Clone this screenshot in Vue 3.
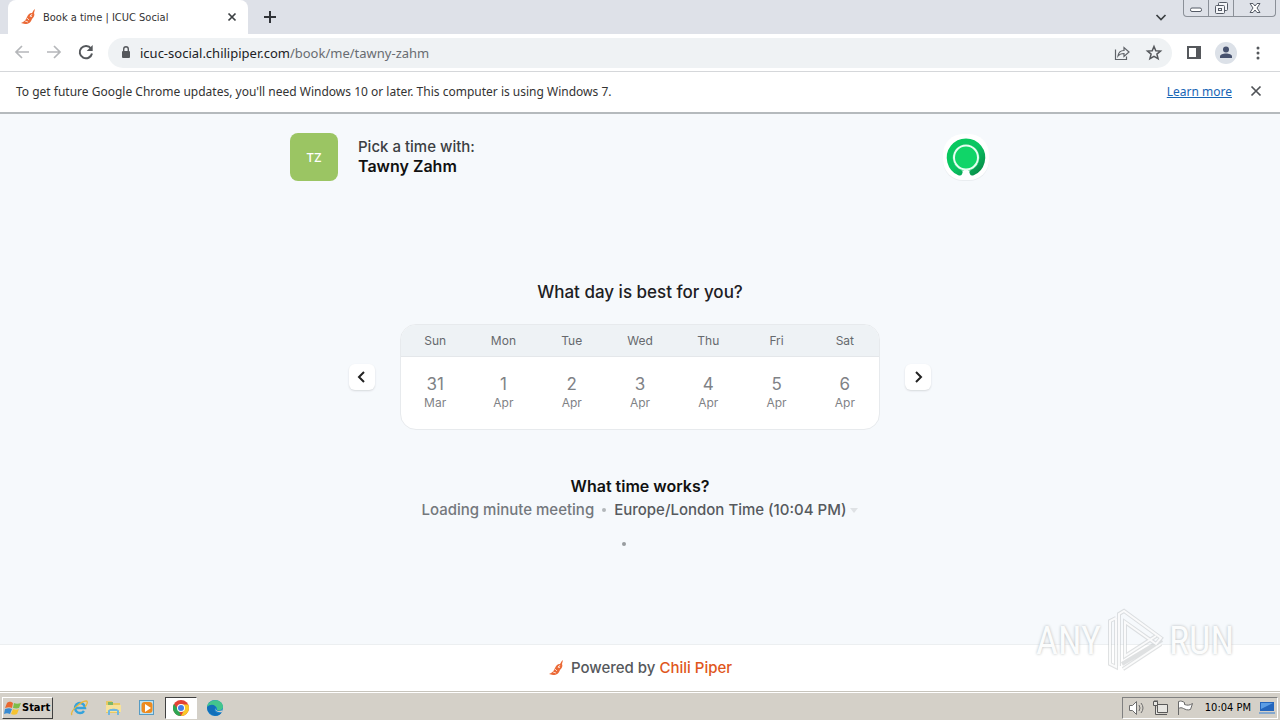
<script setup>
const days = [
  { name: 'Sun', date: '31', month: 'Mar' },
  { name: 'Mon', date: '1', month: 'Apr' },
  { name: 'Tue', date: '2', month: 'Apr' },
  { name: 'Wed', date: '3', month: 'Apr' },
  { name: 'Thu', date: '4', month: 'Apr' },
  { name: 'Fri', date: '5', month: 'Apr' },
  { name: 'Sat', date: '6', month: 'Apr' },
]
</script>

<template>
  <div class="desktop">
    <header class="tabstrip">
      <div class="tab">
        <svg class="chili" viewBox="0 0 16 18" aria-hidden="true">
          <path d="M15 1c-2 1-2 3-3 4-3 0-4 2-5 4-1 3-3 5-6 6l4 1c4 0 6-2 7-5 2-2 3-4 2-6z" />
          <path class="cut" d="M12 6l-2 3M7 10l2 2M5 13l3 1M10 7l2 2" />
        </svg>
        <span class="tab-title">Book a time | ICUC Social</span>
        <button class="plain" aria-label="Close tab"><svg width="16" height="16" viewBox="0 0 16 16"><path d="M4.500 4.500l7 7M11.500 4.500l-7 7" stroke="#3c4043" stroke-width="1.700" /></svg></button>
      </div>
      <button class="plain newtab" aria-label="New tab"><svg width="16" height="16" viewBox="0 0 16 16"><path d="M8 2v12M2 8h12" stroke="#303338" stroke-width="2" /></svg></button>
      <button class="plain chevron" aria-label="Search tabs"><svg width="16" height="16" viewBox="0 0 16 16" fill="none"><path d="M3.500 6l4.500 4.500L12.500 6" stroke="#3c4043" stroke-width="1.700" /></svg></button>
      <div class="winbuttons">
        <button aria-label="Minimize"><svg width="16" height="16" viewBox="0 0 16 16" fill="none"><rect x="2.500" y="8" width="11" height="3.500" rx="1.500" fill="#fff" stroke="#555b66" /></svg></button>
        <button aria-label="Restore"><svg width="16" height="16" viewBox="0 0 16 16" fill="#f4f5f8" stroke="#555b66"><rect x="5.500" y="2.500" width="9" height="8" rx="1" /><rect x="2.500" y="5.500" width="9" height="8" rx="1" /><rect x="5.500" y="8.500" width="3" height="2" /></svg></button>
        <button class="winclose" aria-label="Close"><svg width="16" height="16" viewBox="0 0 16 16" fill="#fff" stroke="#555b66"><path d="M3 3.500h3l2 2.500 2-2.500h3L10 8l3 4.500h-3L8 10l-2 2.500H3L6 8z" /></svg></button>
      </div>
    </header>

    <nav class="toolbar">
      <button class="plain" aria-label="Back"><svg width="20" height="20" viewBox="0 0 20 20" fill="none" stroke="#b5b7ba" stroke-width="1.700"><path d="M17 9H4M10 3L4 9l6 6" /></svg></button>
      <button class="plain" aria-label="Forward"><svg width="20" height="20" viewBox="0 0 20 20" fill="none" stroke="#b5b7ba" stroke-width="1.700"><path d="M3 9h13M10 3l6 6-6 6" /></svg></button>
      <button class="plain" aria-label="Reload"><svg width="20" height="20" viewBox="0 0 20 20" fill="none"><path d="M15 5.500A6.200 6.200 0 1 0 16 10.500" stroke="#55585c" stroke-width="2" /><path d="M16.700 2v6h-6z" fill="#55585c" /></svg></button>
      <div class="address">
        <svg class="lock" width="16" height="16" viewBox="0 0 16 16"><rect x="4" y="6" width="8" height="7" rx="1" fill="#55585c" /><path d="M5.700 7V4a2.300 2.300 0 0 1 4.600 0V7" fill="none" stroke="#55585c" stroke-width="1.400" /></svg>
        <a class="url" href="#">icuc-social.chilipiper.com<span>/book/me/tawny-zahm</span></a>
        <button class="plain" aria-label="Share"><svg width="18" height="18" viewBox="0 0 18 18" fill="none" stroke="#5f6368" stroke-width="1.200"><path d="M2.500 5.500v10h11v-3M5 12c.5-4 3-5.500 6-5.500V3.500l5 4.500-5 4.500V9.500c-3 0-4.500.5-6 2.500z" /></svg></button>
        <button class="plain" aria-label="Bookmark"><svg width="18" height="18" viewBox="0 0 18 18" fill="none" stroke="#55585c" stroke-width="1.500"><path d="M9 2.500l1.800 4.200 4.700.4-3.600 3 1.200 4.600L9 12.300l-4.100 2.400 1.200-4.600-3.600-3 4.700-.4z" /></svg></button>
      </div>
      <div class="tools">
        <button class="plain" aria-label="Side panel"><svg width="16" height="16" viewBox="0 0 16 16"><rect x="2" y="2" width="12" height="11" fill="none" stroke="#55585c" stroke-width="2" /><path d="M10 2h4v11h-4z" fill="#55585c" /></svg></button>
        <button class="plain" aria-label="Profile"><svg width="22" height="22" viewBox="0 0 22 22"><circle cx="11" cy="11" r="11" fill="#dce1e8" /><circle cx="11" cy="7.500" r="3" fill="#46516e" /><path d="M5 16v-1.500c0-4 12-4 12 0V16z" fill="#46516e" /></svg></button>
        <button class="plain" aria-label="Menu"><svg width="16" height="16" viewBox="0 0 16 16" fill="#55585c"><circle cx="8" cy="3" r="1.500" /><circle cx="8" cy="8" r="1.500" /><circle cx="8" cy="13" r="1.500" /></svg></button>
      </div>
    </nav>

    <aside class="notice">
      <span class="message">To get future Google Chrome updates, you'll need Windows 10 or later. This computer is using Windows 7.</span>
      <a href="#">Learn more</a>
      <button class="plain" aria-label="Dismiss"><svg width="16" height="16" viewBox="0 0 16 16"><path d="M3.500 3.500l9 9M12.500 3.500l-9 9" stroke="#505357" stroke-width="1.700" /></svg></button>
    </aside>

    <main class="page">
      <section class="host">
        <div class="avatar">TZ</div>
        <div class="who">
          <p>Pick a time with:</p>
          <h1>Tawny Zahm</h1>
        </div>
        <svg class="brand" width="48" height="48" viewBox="0 0 48 48" aria-label="ICUC">
          <defs><linearGradient id="green" x1="0" y1="0" x2="1" y2="1"><stop offset="0" stop-color="#08c95d" /><stop offset=".5" stop-color="#09c662" /><stop offset="1" stop-color="#088a48" /></linearGradient></defs>
          <rect x="1" y="2" width="46" height="46" rx="20" fill="#e9edf0" />
          <rect x="1" y="1" width="46" height="46" rx="20" fill="#fff" />
          <path d="M17.500 39.500A16.200 16.200 0 1 1 30.500 39.500" fill="none" stroke="url(#green)" stroke-width="6" stroke-linecap="round" />
          <circle cx="24" cy="24.500" r="13.500" fill="#0bbd5e" />
          <path d="M21.500 36h5v3l2 4h-9l2-4z" fill="#fff" />
          <circle cx="24" cy="24.500" r="12" fill="#10d568" stroke="#e5fff0" stroke-width="2" />
        </svg>
      </section>

      <h2 class="day-title">What day is best for you?</h2>
      <section class="picker">
        <button class="arrow" aria-label="Previous week"><svg width="16" height="16" viewBox="0 0 16 16" fill="none" stroke="#222" stroke-width="2"><path d="M10 3L5 8l5 5" /></svg></button>
        <div class="calendar">
          <table>
            <thead><tr><th v-for="day in days" :key="day.name" scope="col">{{ day.name }}</th></tr></thead>
            <tbody><tr><td v-for="day in days" :key="day.name"><b>{{ day.date }}</b><span>{{ day.month }}</span></td></tr></tbody>
          </table>
        </div>
        <button class="arrow" aria-label="Next week"><svg width="16" height="16" viewBox="0 0 16 16" fill="none" stroke="#222" stroke-width="2"><path d="M6 3l5 5-5 5" /></svg></button>
      </section>

      <h2 class="time-title">What time works?</h2>
      <div class="meeting">
        <span>Loading minute meeting</span>
        <i class="bullet"></i>
        <button class="plain zone">Europe/London Time (10:04 PM)<svg width="8" height="5" viewBox="0 0 8 5"><path d="M0 0h8L4 5z" fill="#dfe2e5" /></svg></button>
      </div>
      <div class="loader" role="status" aria-label="Loading"><i class="bullet dark"></i></div>
    </main>

    <footer class="powered">
      <svg class="chili" viewBox="0 0 16 18" aria-hidden="true">
        <path d="M15 1c-2 1-2 3-3 4-3 0-4 2-5 4-1 3-3 5-6 6l4 1c4 0 6-2 7-5 2-2 3-4 2-6z" />
        <path class="cut" d="M12 6l-2 3M7 10l2 2M5 13l3 1M10 7l2 2" />
      </svg>
      <span>Powered by <a href="#">Chili Piper</a></span>
    </footer>

    <div class="watermark">
      <span>ANY</span>
      <svg width="60" height="66" viewBox="0 0 60 66" fill="none">
        <path d="M11 10l-6 3v43l6 3V11M14 58V6l5-3 37 27-5 6-31-22v34l31-20M17 56l40-24M18 61l38-25" stroke="#c4c8ca" stroke-width="4" opacity=".55" />
        <path d="M11 10l-6 3v43l6 3V11M14 58V6l5-3 37 27-5 6-31-22v34l31-20M18 61l38-25" stroke="#fff" stroke-width="2" opacity=".85" />
      </svg>
      <span>RUN</span>
    </div>

    <footer class="taskbar">
      <button class="start">
        <svg width="18" height="16" viewBox="0 0 18 16"><path d="M3 3c3-2 4-1 6 0L8 8C6 7 4 7 1 8z" fill="#e96830" /><path d="M10 3c2 1 4 1 7 0l-2 5c-3 1-4 0-6 0z" fill="#7dbd48" /><path d="M1 9c3-1 5-1 7 0l-2 5c-2-1-4-1-6 0z" fill="#398bd2" /><path d="M9 9c2 1 4 1 6 0l-2 5c-2 1-4 1-6 0z" fill="#f5c331" /></svg>
        Start
      </button>
      <button class="task" aria-label="Internet Explorer"><svg width="20" height="20" viewBox="0 0 20 20" fill="none"><path d="M15 13a5 5 0 1 1 1-3H6" stroke="#35a3dc" stroke-width="2.500" /><path d="M3 17c-3-3 9-14 14-14 3 0 0 5-1 6" stroke="#e9b73c" stroke-width="1.300" /></svg></button>
      <button class="task" aria-label="Explorer"><svg width="20" height="20" viewBox="0 0 20 20"><path d="M3 3h6l1 2h7v10H3z" fill="#e9c964" /><path d="M5 4h5v5H5z" fill="#7cb66a" /><path d="M3 7h15v7H3z" fill="#f7e29a" /><path d="M5 17v-4c0-3 11-3 11 0v4h-2v-4H7v4z" fill="#70b7df" /></svg></button>
      <button class="task" aria-label="Media Player"><svg width="20" height="20" viewBox="0 0 20 20"><rect x="2.500" y="2.500" width="14" height="14" fill="#bce2f2" stroke="#579bc3" /><rect x="4.500" y="4" width="11" height="11" rx="3" fill="#ed8b20" /><path d="M8 6l6 4-6 4z" fill="#fff" /></svg></button>
      <button class="task active" aria-label="Chrome"><svg width="16" height="16" viewBox="0 0 16 16"><circle cx="8" cy="8" r="8" fill="#e34235" /><path d="M1 4l4.500 6L8 16A8 8 0 0 1 1 4z" fill="#2da653" /><path d="M8 4.500h7.200A8 8 0 0 1 8 16l3.200-6z" fill="#f9c929" /><circle cx="8" cy="8" r="4" fill="#fff" /><circle cx="8" cy="8" r="3" fill="#437fe8" /></svg></button>
      <button class="task" aria-label="Edge"><svg width="18" height="18" viewBox="0 0 18 18"><circle cx="9" cy="9" r="8" fill="#1683cf" /><path d="M1 8C2-1 17-1 17 8c0 3-4 4-6 3 1-4-5-6-10-3z" fill="#43c58d" /><path d="M1 8c4-4 9-2 9 1-2 0-2 4 1 5 2 1 4 0 5-1-2 4-7 5-11 2-3-2-4-4-4-7z" fill="#126fb9" /><path d="M10 9c-1 1 0 3 3 3 2 0 4-1 4-2l-1 3c-5 1-8-2-6-4z" fill="#d4d0c8" /></svg></button>
      <div class="tray">
        <svg width="18" height="16" viewBox="0 0 18 16" fill="#fff" stroke="#6d6d6d"><path d="M1.500 5.500h3l4-4v13l-4-4h-3z" /><path d="M11 5q2 3 0 6M13 3q4 5 0 10" fill="none" /></svg>
        <svg width="18" height="16" viewBox="0 0 18 16" fill="#e7e6e2" stroke="#595959"><path d="M5.500 4.500h10v8h-10zM7 14.500h8M3.500 6v8.500H7" /><path d="M1.500 1.500v4h4v-4zM3 0v2M5 0v2" /></svg>
        <svg width="18" height="16" viewBox="0 0 18 16" fill="#fff" stroke="#696969"><path d="M2.500 15V1.500c3-1 4 0 6 1v2c3 1 5 1 8-1l-2 6c-3 1-5 0-7-1-2-1-3-1-5 0" /></svg>
        <time>10:04 PM</time>
        <svg width="16" height="14" viewBox="0 0 16 14"><path d="M1 1h14v9H1z" fill="#2466bd" /><path d="M2 2h12L2 8z" fill="#5b9de5" /><path d="M0 11h16v2H0z" fill="#83a7ce" /></svg>
      </div>
    </footer>
  </div>
</template>

<style>
body { margin: 0; }
</style>

<style scoped>
* { box-sizing: border-box; }
.desktop { position: relative; display: flex; flex-direction: column; min-height: 100vh; background: #f6f9fc; font-family: "Noto Sans", "DejaVu Sans Condensed", sans-serif; color: #333; }
button { font: inherit; color: inherit; padding: 0; border: 0; background: none; }
svg { flex: none; }
p, h1, h2 { margin: 0; }
.plain { display: flex; align-items: center; }
.chili { width: 16px; height: 18px; fill: #eb6a37; }
.cut { fill: none; stroke: #fff; stroke-width: 1; opacity: .7; }

.tabstrip { display: flex; align-items: center; height: 34px; background: #dee1e8; }
.tab { display: flex; align-items: center; gap: 7px; align-self: stretch; width: 240px; margin-left: 8px; padding: 0 8px 0 12px; border-radius: 8px 8px 0 0; background: #fff; }
.tab-title { flex: 1; font-family: "DejaVu Sans Condensed", sans-serif; font-size: 11px; }
.newtab { margin-left: 14px; }
.chevron { margin: 0 14px 0 auto; }
.winbuttons { display: flex; align-self: flex-start; height: 17px; margin-right: 4px; border: 1px solid #8b9098; border-top: 0; border-radius: 0 0 4px 4px; }
.winbuttons button { display: flex; justify-content: center; width: 25px; border-right: 1px solid #8b9098; }
.winbuttons .winclose { width: 41px; border: 0; }

.toolbar { display: flex; align-items: center; gap: 12px; height: 38px; padding: 0 14px 0 12px; border-bottom: 1px solid #d5d7da; background: #fff; }
.address { display: flex; flex: 1; align-items: center; gap: 14px; height: 30px; padding: 0 9px 0 10px; border-radius: 15px; background: #eff2f4; }
.tools { display: flex; align-items: center; gap: 13px; padding-left: 2px; }
.lock { margin-right: -8px; }
.url { flex: 1; font-size: 13px; color: #202124; text-decoration: none; }
.url span { color: #686c71; }
.notice { display: flex; align-items: center; gap: 16px; height: 42px; padding: 0 16px 2px; border-bottom: 2px solid #b5babd; background: #fff; font-size: 12px; }
.notice .message { flex: 1; }
.notice a { color: #1765b5; }

.page { display: flex; flex: 1; flex-direction: column; align-items: center; padding: 19px 20px 0; font-family: Inter, sans-serif; }
.host { display: flex; align-items: center; gap: 20px; width: 100%; max-width: 700px; }
.avatar { display: grid; place-items: center; width: 48px; height: 48px; border-radius: 8px; background: #9bc563; color: #fff; font-size: 12px; font-weight: 500; }
.who { flex: 1; }
.who p { font-size: 15px; line-height: 18px; font-weight: 500; color: #3c3f43; }
.who h1 { font-size: 16px; line-height: 20px; font-weight: 600; color: #111; }
h2 { font-size: 16px; line-height: 24px; font-weight: 600; }
.day-title { margin-top: 99px; font-size: 17px; font-weight: 500; color: #1d2023; }
.picker { display: flex; align-items: center; justify-content: space-between; width: 100%; max-width: 582px; margin-top: 20px; }
.arrow { display: grid; place-items: center; width: 26px; height: 26px; border-radius: 6px; background: #fff; box-shadow: 0 1px 2px #d6d9dc; }
.calendar { width: 100%; max-width: 480px; overflow: hidden; border: 1px solid #e7eaed; border-radius: 16px; background: #fff; }
table { width: 100%; table-layout: fixed; border-collapse: separate; border-spacing: 0; text-align: center; }
th { height: 32px; padding: 0; border-bottom: 1px solid #e4e7ea; background: #eef2f5; font-size: 12px; font-weight: 400; color: #66696d; }
td { height: 72px; padding: 0; color: #7f8286; }
td b { display: block; font-size: 17px; line-height: 20px; font-weight: 400; }
td span { display: block; font-size: 12px; line-height: 18px; }
.time-title { margin-top: 44px; color: #111; }
.meeting { display: flex; align-items: center; gap: 8px; font-size: 15px; line-height: 24px; font-weight: 500; color: #74787c; }
.zone { gap: 4px; color: #565a5e; }
.bullet { width: 4px; height: 4px; border-radius: 2px; background: #b3b7ba; }
.dark { background: #989c9f; }
.loader { display: flex; width: 36px; margin-top: 20px; }

.powered { display: flex; align-items: center; justify-content: center; gap: 7px; height: 48px; padding-bottom: 2px; border-top: 1px solid #eceff1; background: #fff; font: 500 15px/20px Inter, sans-serif; color: #55585c; }
.powered a { color: #e0561b; text-decoration: none; }
.watermark { position: absolute; right: 46px; bottom: 46px; display: flex; align-items: center; gap: 4px; font: 38px/66px "Liberation Sans Narrow", "Roboto Condensed", "Liberation Sans", sans-serif; color: #fbfcfc; text-shadow: 0 0 3px #b2b7ba; }

.taskbar { display: flex; align-items: center; height: 28px; padding: 2px 2px 0; border-top: 1px solid #fff; outline: 1px solid #c7c4bc; background: #d4d0c8; }
.start { display: flex; align-items: center; height: 22px; padding: 0 2px 0 1px; margin-right: 10px; border: 1px solid; border-color: #fff #404040 #404040 #fff; font-family: "DejaVu Sans Condensed", sans-serif; font-size: 11px; font-weight: 700; color: #000; }
.task { display: grid; place-items: center; width: 32px; height: 22px; margin-right: 2px; }
.task.active { border: 1px solid; border-color: #404040 #fff #fff #404040; background: #fff; }
.tray { display: flex; align-items: center; gap: 6px; height: 22px; margin-left: auto; padding: 0 2px 0 5px; border: 1px solid; border-color: #808080 #fff #fff #808080; font-family: "DejaVu Sans Condensed", sans-serif; font-size: 11px; color: #000; }
.tray time { margin: 0 2px 0 5px; }
</style>
